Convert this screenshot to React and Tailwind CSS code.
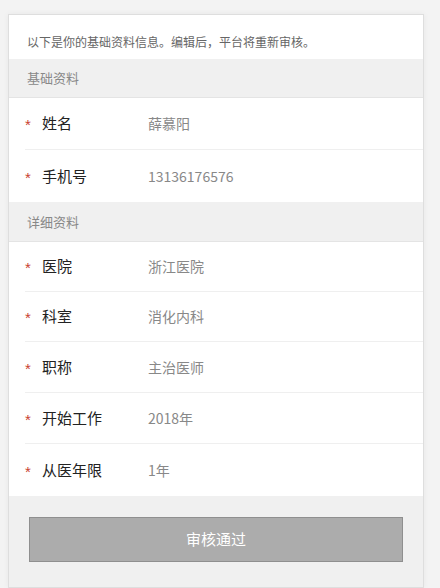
import React from "react";

const font = { fontFamily: '"Noto Sans CJK SC", "Noto Sans", sans-serif' };

function Row({ label, value, last, h = "h-[52px]" }) {
  return (
    <div className={`ml-[16px] flex items-center ${h} ${last ? "" : "border-b border-[#efefef]"}`}>
      <span className="w-[17px] text-[15px] leading-none text-[#c9412f] pt-[2px] font-['Liberation_Sans']">*</span>
      <span className="w-[106px] text-[15px] text-[#222]">{label}</span>
      <span className="text-[14px] text-[#888]">{value}</span>
    </div>
  );
}

function Header({ title, h = "h-[40px]" }) {
  return (
    <div className={`${h} flex items-center bg-[#f0f0f0] border-b border-[#e4e4e4] pl-[18px] text-[13px] text-[#888]`}>
      {title}
    </div>
  );
}

export default function App() {
  return (
    <div className="min-h-[588px] bg-[#f3f3f3] pt-[14px] pl-[8px]" style={font}>
      <div className="w-[416px] min-h-[574px] bg-white border border-[#dedede] shadow-[0_0_6px_rgba(0,0,0,0.05)] flex flex-col">
        <div className="pt-[19px] pb-[9px] pl-[18px] text-[12px] leading-[16px] text-[#666]">
          以下是你的基础资料信息。编辑后，平台将重新审核。
        </div>
        <Header title="基础资料" h="h-[39px]" />
        <Row label="姓名" value="薛慕阳" />
        <Row label="手机号" value="13136176576" last />
        <Header title="详细资料" />
        <Row label="医院" value="浙江医院" h="h-[50px]" />
        <Row label="科室" value="消化内科" h="h-[50px]" />
        <Row label="职称" value="主治医师" h="h-[51px]" />
        <Row label="开始工作" value="2018年" h="h-[51px]" />
        <Row label="从医年限" value="1年" h="h-[52px]" last />
        <div className="flex-1 bg-[#f0f0f0] px-[20px] pt-[21px]">
          <div className="h-[45px] bg-[#acacac] border border-[#8f8f8f] flex items-center justify-center text-[15px] text-white">
            审核通过
          </div>
        </div>
      </div>
    </div>
  );
}
